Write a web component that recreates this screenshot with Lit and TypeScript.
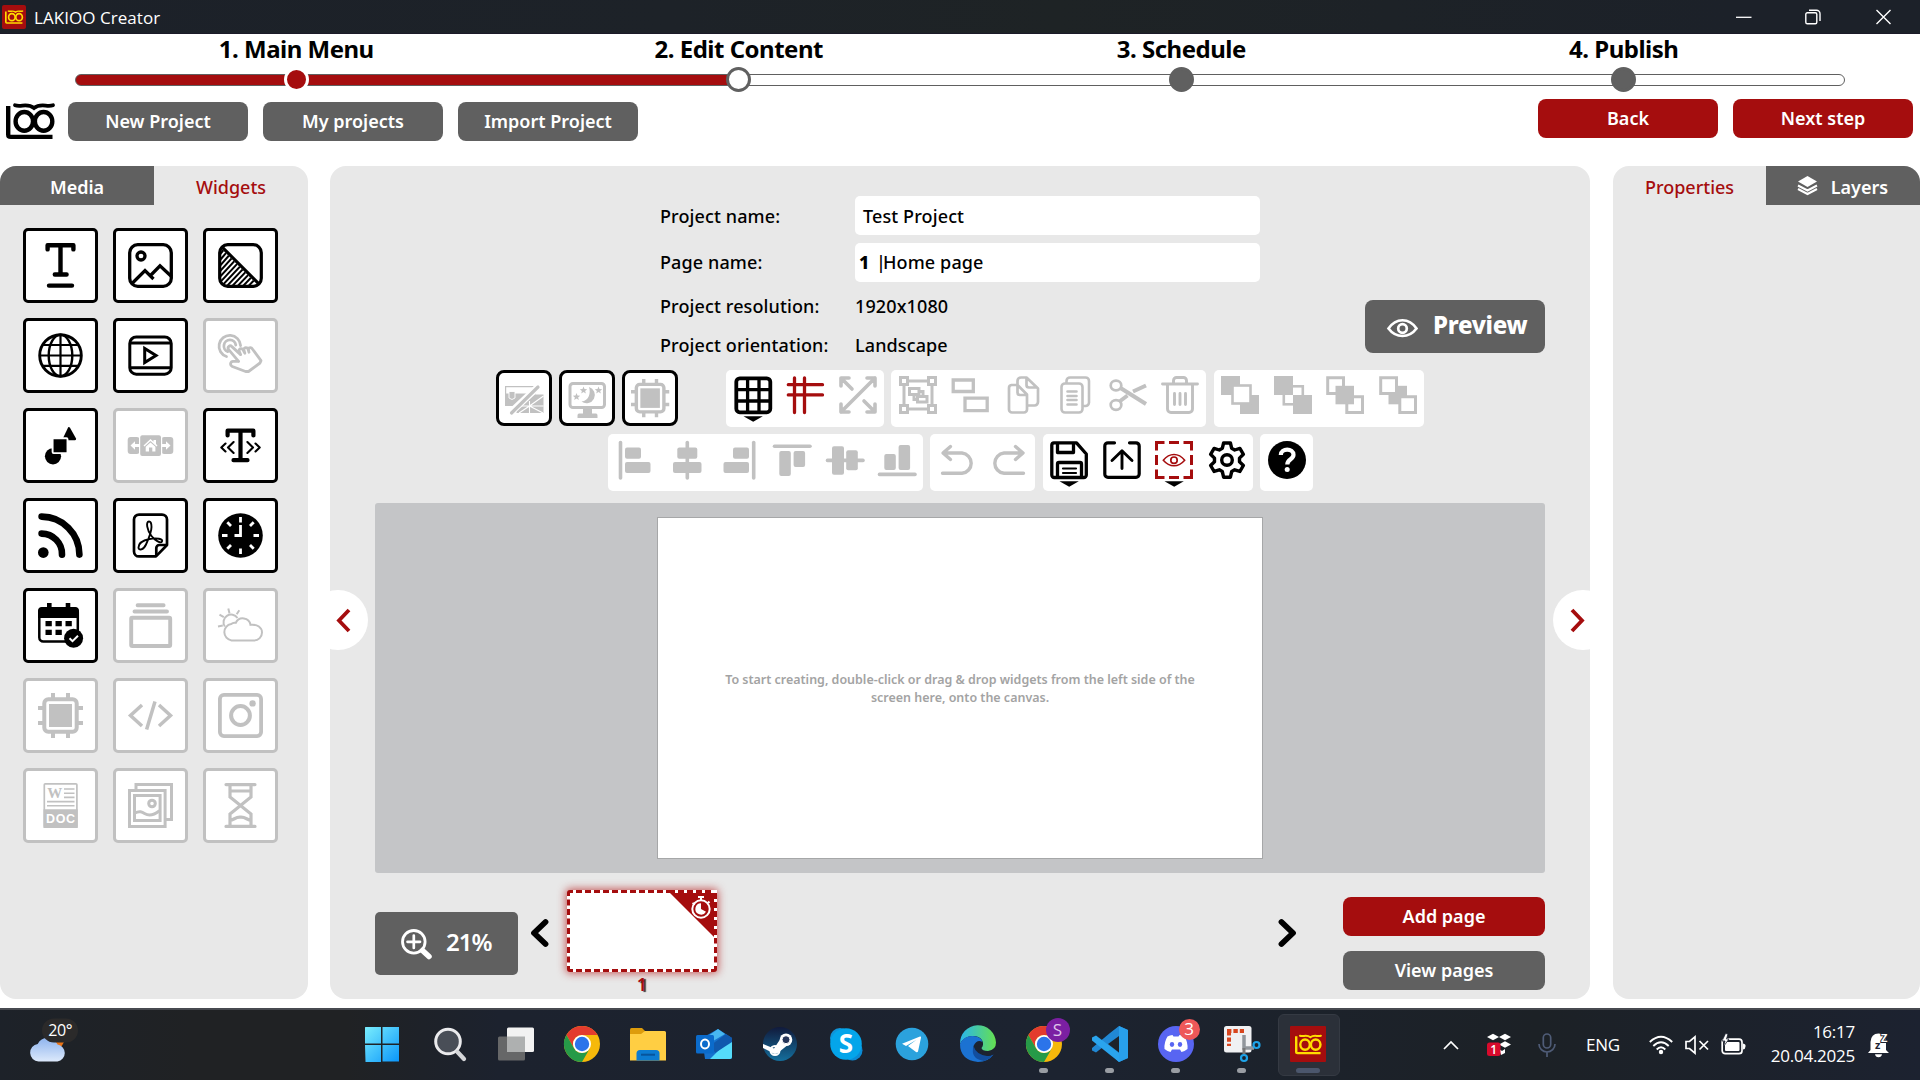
import { LitElement, html, css, svg, SVGTemplateResult } from "lit";
import { customElement } from "lit/decorators.js";
import { classMap } from "lit/directives/class-map.js";

type Art = SVGTemplateResult;

/* ---------- brand ---------- */
const logo = svg`
  <g fill="none" stroke="currentColor" stroke-linecap="round">
    <path d="M2.2 3V31.5q0 2.4 2.6 2.4H46.5" stroke-width="4.4" stroke-linecap="butt"/>
    <ellipse cx="18.3" cy="18.4" rx="8.7" ry="9.4" stroke-width="4.4"/>
    <ellipse cx="37.6" cy="18.4" rx="8.7" ry="9.4" stroke-width="4.4"/>
    <path d="M9 2.2C15 4.5 21 -.5 28 5 C35 -.5 41 4.5 47 2.2" stroke-width="3.8"/>
  </g>`;

/* ---------- widget palette, 45 x 45 ---------- */
const chip = svg`
  <g fill="none" stroke="currentColor" stroke-width="4">
    <rect x="6.3" y="6.3" width="32.4" height="32.4" rx="4"/>
    <path d="M15 0V6M30 0V6M15 39V45M30 39V45M0 15H6M0 30H6M39 15H45M39 30H45"/>
  </g><rect x="11" y="11" width="23" height="23" fill="currentColor"/>`;

const hatch = [14, 19.5, 25, 30.5, 36, 41.5, 47, 52.5, 58, 63.5, 69, 74.5];

const widgets: { off?: boolean; art: Art }[] = [
  { art: svg`<path d="M9.6 6.4V2.3H35.4V6.4M22.5 2.3V31.5M16.8 31.5H28.6M11 42.6H34" fill="none" stroke="currentColor" stroke-width="4.4" stroke-linecap="round" stroke-linejoin="round"/>` },
  { art: svg`<g fill="none" stroke="currentColor" stroke-width="3.3"><rect x="1.7" y="1.7" width="41.6" height="41.6" rx="8"/><circle cx="13" cy="13" r="4"/><path d="M3.5 41 17 27.6 25.5 36M22.5 32.5 32 22.8 43.5 33.5"/></g>` },
  { art: svg`<g fill="none" stroke="currentColor" stroke-width="3.2"><rect x="1.7" y="1.7" width="41.6" height="41.6" rx="8"/><path d="M3.6 3.6 41.6 41.6"/></g><clipPath id="tri"><path d="M2 4 41 43H9a7 7 0 0 1-7-7Z"/></clipPath><g clip-path="url(#tri)" stroke="currentColor" stroke-width="2">${hatch.map((c) => svg`<path d=${`M0 ${c}L${c} ${c * 0.02 - 4}`}/>`)}</g>` },
  { art: svg`<g fill="none" stroke="currentColor" stroke-width="2.9"><circle cx="22.5" cy="22.5" r="20.8"/><ellipse cx="22.5" cy="22.5" rx="11.8" ry="20.8" stroke-width="2.4"/><path d="M22.5 2V43M4.5 12H40.5M2 22.5H43M4.5 32.8H40.5" stroke-width="2.2"/></g>` },
  { art: svg`<g fill="none" stroke="currentColor" stroke-width="3"><rect x="1.8" y="4" width="41.4" height="37.2" rx="6.5"/><path d="M2 10H43M2 34.7H43"/><path d="M16.7 15.5V29.5L28 22.5Z"/></g>` },
  { off: true, art: svg`<g fill="none" stroke="currentColor" stroke-width="2.8" stroke-linejoin="round" stroke-linecap="round"><path d="M8.5 23.5A10.8 10.8 0 1 1 22.6 12.6M9.8 18.6A6 6 0 1 1 17.8 12"/><path d="M20.6 28.4 10.5 16.4c-1.5-2.4 1.5-4.8 3.4-2.8L22.6 21.6M22.6 21.6l-1.6-3.8c.3-2.8 3.4-2.6 4.2-.6l1.6 3-1-3.6c.6-2.6 3.6-2.3 4.2-.4l1 3-.6-3.2c.7-2 3-1.8 4 0L43 27.6 42 30 30.5 38.5H27.6L14.3 33.5c-3-1.6-1.6-5.4 1-5.2l5.3.1"/></g>` },
  { art: svg`<g fill="currentColor"><path d="M30.2 4.3q1-.6 1.8.5L38 15.6q.4 1.5-1 1.7H24Z"/><circle cx="15" cy="33.3" r="8.1"/><rect x="14.6" y="15.2" width="14.9" height="14.9" rx="1" stroke="#fff" stroke-width="1.9"/></g>` },
  { off: true, art: svg`<g fill="currentColor"><rect x="-.3" y="14" width="12" height="17" rx="3"/><rect x="33.3" y="14" width="12" height="17" rx="3"/><rect x="11.6" y="11.7" width="22" height="22" rx="2.6" stroke="#fff" stroke-width="1.2"/></g><g fill="#fff"><path d="M2.5 22.5 7 18.3V21h4v3H7v2.7ZM42.5 22.5 38 18.3V21h-4v3h4v2.7ZM15.500 22.500l7-6.500 3 2.800V17H28v4l1.500 1.500-1 1-6-5.400-6 5.400Z"/><path d="M17.700 23.800l4.800-4.300 4.900 4.300V28.500H24.300V24.500H21V28.500H17.700Z"/></g>` },
  { art: svg`<g fill="none" stroke="currentColor" stroke-linejoin="round" stroke-linecap="round"><path d="M9.6 12.5V7.7H35.4V12.5M22.5 7.7V37.2M15.5 37.2H29.5" stroke-width="4.2"/><path d="M7.5 20.5 3.3 24.5 7.5 28.5M15.6 19 10 24.5 15.6 30M37.5 20.5 41.7 24.5 37.5 28.5M29.4 19 35 24.5 29.4 30" stroke-width="2.1"/></g>` },
  { art: svg`<circle cx="5.3" cy="39.6" r="5.3" fill="currentColor"/><path d="M3.6 20.6A20.4 20.4 0 0 1 24 41.6M3.6 3.6A38 38 0 0 1 41.4 41.6" fill="none" stroke="currentColor" stroke-width="6.6" stroke-linecap="round"/>` },
  { art: svg`<g fill="none" stroke="currentColor" stroke-width="2.7" stroke-linejoin="round"><path d="M28 43.4H11a5 5 0 0 1-5-5V6.6a5 5 0 0 1 5-5H34a5 5 0 0 1 5 5V32Z"/><path d="M28.3 43V35a3 3 0 0 1 3-3H39"/><path stroke-width="1.9" d="M21 8.5c-3.5 0-2 9 2.5 14.500 3 4 9 8 10.500 5.500s-5.500-4-12.500-2.500S10.500 31 10.500 34.500s5 2.500 7.500-3S23.500 18 23.500 14 23 8.500 21 8.500Z"/></g>` },
  { art: svg`<circle cx="22.5" cy="22.5" r="22.3" fill="currentColor"/><g stroke="#fff" stroke-width="2.8" fill="none"><path d="M22.500 4V9.500M22.500 35.500V41M4 22.500H9.500M35.500 22.500H41M9.300 9.300 13 13M35.700 9.300 32 13M9.300 35.700 13 32M35.700 35.700 32 32M22.500 12V22.500H16.500" /></g>` },
  { art: svg`<rect x="1.300" y="5.200" width="38.500" height="33.300" rx="4" fill="none" stroke="currentColor" stroke-width="2.500"/><path d="M0 15V8q0-4 4-4H37q4 0 4 4V15ZM9 0h4.600V6H9ZM27.700 0h4.600V6h-4.600ZM7.500 18h6.300v5.300H7.500ZM17.500 18h6.300v5.300H17.500ZM27.500 18h6.300v5.300H27.500ZM7.500 26.700h6.300V32H7.500ZM17.500 26.700h6.300V32H17.500Z" fill="currentColor"/><circle cx="35.600" cy="35.300" r="9.500" fill="currentColor"/><path d="M31.500 35.300 34.500 38.200 40 32.800" stroke="#fff" stroke-width="2" fill="none"/>` },
  { off: true, art: svg`<g fill="none" stroke="currentColor" stroke-width="3.900"><path d="M9.600 2.300H35.600M6.500 8.500H39" stroke-linecap="round"/><rect x="3.200" y="14.800" width="39" height="28.200" rx="1"/></g>` },
  { off: true, art: svg`<g fill="none" stroke="currentColor" stroke-width="2"><path d="M13.500 37.400a8.300 8.300 0 0 1-.3-16.400c1.300-1.200 3-1.600 4.600-1.200a7.800 7.800 0 0 1 14.700 2c7-.8 11.500 2.800 11.500 7.800a7.800 7.800 0 0 1-7.800 7.800Z"/><path d="M6.800 23.500A7.200 7.200 0 1 1 19.500 15M0 23.400l4.800-.8M1.500 11.600l4.300 2.500M10.300 5.500l1.200 4.800M21.300 7.300l-2.600 4"/></g>` },
  { off: true, art: chip },
  { off: true, art: svg`<path d="M14 12 2.500 22.500 14 33M27 8.500 18.600 36.500M31 12 42.500 22.500 31 33" fill="none" stroke="currentColor" stroke-width="3.500"/>` },
  { off: true, art: svg`<rect x="1.900" y="1.900" width="41.200" height="41.200" rx="4" fill="none" stroke="currentColor" stroke-width="3.800"/><circle cx="22.500" cy="22.500" r="9.400" fill="none" stroke="currentColor" stroke-width="4"/><circle cx="34.600" cy="10.400" r="3.200" fill="currentColor"/>` },
  { off: true, art: svg`<rect x="6.300" y=".8" width="32.600" height="43.400" rx="1" fill="none" stroke="currentColor" stroke-width="1.700"/><path d="M5.500 26.300H39.700V45H5.500Z" fill="currentColor"/><path d="M26 6H36.500M26 10.200H36.500M26 14.400H36.500M9 18.600H36.500M9 22.700H36.500" stroke="currentColor" stroke-width="1.600"/><text class="w-letter" x="16.700" y="15.200">W</text><text class="doc-letters" x="22.900" y="39.500">DOC</text>` },
  { off: true, art: svg`<g fill="none" stroke="currentColor" stroke-width="3"><path d="M8 6V1.600H43.500V36.500H38"/><rect x="1.500" y="7.500" width="35.600" height="36"/><rect x="6.500" y="12.500" width="25.600" height="25"/><circle cx="24" cy="20.500" r="3.300"/><path d="M7 30c4.500-2.500 7-1 10 .8s8 2 14.500-3"/></g>` },
  { off: true, art: svg`<g fill="none" stroke="currentColor" stroke-width="3.200"><path d="M8 1.600H37M8 43.400H37" stroke-linecap="round"/><path d="M12 2V14L22.500 22.500 33 14V2M12 43V31L22.500 22.500 33 31V43M12 8H33M12.500 37.500C17 36 18 33.800 22.500 34.200 27 33.800 28 36 32.500 37.500"/></g>` },
];

/* ---------- toolbar, 38 x 38 ---------- */
const line = (d: string, w = 3.3) =>
  svg`<path d=${d} fill="none" stroke="currentColor" stroke-width=${w} stroke-linecap="round" stroke-linejoin="round"/>`;
const caret = svg`<path d="M9.500 40.300H28.800L19.200 45.800Z" fill="#000"/>`;

interface Tool { art: Art; tone?: "ink" | "red" }

const viewTools: Tool[] = [
  { tone: "ink", art: svg`<rect x="2.300" y="2.300" width="34" height="34" rx="3.500" fill="none" stroke="currentColor" stroke-width="3.800"/><path d="M13.600 2V36M25 2V36M2 13.600H36M2 25H36" stroke="currentColor" stroke-width="3.300"/>${caret}` },
  { tone: "red", art: line("M8.500 2V36.500M18.500 2V36.500M2.300 8.700H36.500M2.300 18.900H36.500", 3.300) },
  { art: line("M2 36 36 2M2 10V2H10M2.500 2.500 13 13M28 2H36V10M2 28V36H10M36 28V36H28M35.500 35.500 25 25", 3.600) },
];

const editTools: Tool[] = [
  { art: svg`<g fill="none" stroke="currentColor" stroke-width="3"><path d="M1.500 1.500H8.500V8.500H1.500ZM29.500 1.500H36.500V8.500H29.500ZM1.500 29.500H8.500V36.500H1.500ZM29.500 29.500H36.500V36.500H29.500ZM10 5H28M10 33H28M5 10V28M33 10V28"/><path d="M10.500 12.500H20V18.500H10.500ZM18.500 20.500H28V26H18.500ZM15 18V23.500H19M20 15.500H24V20"/></g>` },
  { art: svg`<path d="M2.200 4H22.300V15.500H2.200ZM14 22.200H36.200V34.700H14Z" fill="none" stroke="currentColor" stroke-width="3.300"/>` },
  { art: line("M7.500 9H13.500L23 18.500V33.500a3 3 0 0 1-3 3H8a3 3 0 0 1-3-3V12a3 3 0 0 1 2.500-3ZM13.500 9V16.500a2.500 2.500 0 0 0 2.500 2.500H22.500M13.500 8.500V5a3.500 3.500 0 0 1 3.500-3.500H22.500L34 12.500V26a3.500 3.500 0 0 1-3.500 3.500H24M22.500 2V9a2.500 2.500 0 0 0 2.500 2.500H33", 2.700) },
  { art: line("M10.500 7.500H23a3.500 3.500 0 0 1 3.500 3.500V33a3.500 3.500 0 0 1-3.500 3.500H9A3.500 3.500 0 0 1 5.500 33V11A3.500 3.500 0 0 1 9 7.500ZM10.500 7V5A3.500 3.500 0 0 1 14 1.500H29.500A3.500 3.500 0 0 1 33 5V26.500a3.500 3.500 0 0 1-3.500 3.500H27M11.500 15.500H20.500M11.500 20H20.500M11.500 24H20.500M11.500 28.500H20.500", 2.600) },
  { art: svg`<g fill="none" stroke="currentColor"><ellipse cx="7" cy="9.500" rx="5.300" ry="4.800" stroke-width="2.700"/><ellipse cx="7" cy="29" rx="5.300" ry="4.800" stroke-width="2.700"/><path d="M11.500 12 37 28M10.500 25.500 18.500 19.500M24 15.500 37 9.500" stroke-width="4"/></g>` },
  { art: line("M1.500 8H36.500M12.500 7.500V4.500a3 3 0 0 1 3-3H22.500a3 3 0 0 1 3 3V7.500M6.500 9.500V33a3.500 3.500 0 0 0 3.500 3.500H28a3.500 3.500 0 0 0 3.500-3.500V9.500M13.500 17.500V28.500M19 17.500V28.500M24.500 17.500V28.500", 2.900) },
];

const orderTools: Tool[] = [
  { art: svg`<path d="M0 0H19V19H0ZM19 19H38V38H19Z" fill="currentColor"/><rect x="11.500" y="9.500" width="18" height="18" fill="#fff" stroke="currentColor" stroke-width="2.600"/>` },
  { art: svg`<rect x="9.800" y="10.300" width="19" height="18" fill="#fff" stroke="currentColor" stroke-width="2.600"/><path d="M0 0H19V19H0ZM19 19H38V38H19Z" fill="currentColor"/>` },
  { art: svg`<path d="M1.700 1.700H17.500V17.500H1.700ZM20.800 20.800H36.500V36.500H20.800Z" fill="none" stroke="currentColor" stroke-width="3"/><rect x="9.500" y="9.800" width="18.500" height="18.500" fill="currentColor"/>` },
  { art: svg`<rect x="9.500" y="9.800" width="18.500" height="18.500" fill="currentColor"/><path d="M1.700 1.700H17.500V17.500H1.700ZM20.800 20.800H36.500V36.500H20.800Z" fill="#fff" stroke="currentColor" stroke-width="3"/>` },
];

const bars = (...b: number[][]) => b.map(([x, y, w, h]) => svg`<rect x=${x} y=${y} width=${w} height=${h} rx="2" fill="currentColor"/>`);
const alignTools: Tool[] = [
  { art: svg`${line("M4.500 1.500V37", 3.600)}${bars([9, 6.500, 16, 11.200], [9, 21, 25.500, 11])}` },
  { art: svg`${line("M19.300 1.500V37", 3.600)}${bars([9.300, 6.500, 20, 11.200], [5, 21, 28.500, 11])}` },
  { art: svg`${line("M32.700 1.500V37", 3.600)}${bars([12, 6.500, 16, 11.200], [2.500, 21, 25.500, 11])}` },
  { art: svg`${line("M1.500 5.300H37", 3.600)}${bars([6.300, 10, 11.500, 25], [20.600, 10, 11.500, 16])}` },
  { art: svg`${line("M1.500 19.400H37", 3.600)}${bars([6, 5.300, 12, 28.500], [20.200, 9.300, 11.600, 20])}` },
  { art: svg`${line("M1.500 33.400H37", 3.600)}${bars([6.300, 13, 11.500, 16], [20.600, 4, 11.500, 25])}` },
];
const historyTools: Tool[] = [
  { art: line("M12.500 5.500 5 12 12.500 18.500M5.500 12H24a10.200 10.200 0 0 1 0 20.300H4.500", 3.400) },
  { art: line("M25.500 5.500 33 12 25.500 18.500M32.500 12H14a10.200 10.200 0 0 0 0 20.300H33.500", 3.400) },
];
const fileTools: Tool[] = [
  { tone: "ink", art: svg`${line("M4 1.800H26.500L36.300 13V34a2.500 2.500 0 0 1-2.500 2.500H4.300A2.500 2.500 0 0 1 1.800 34V4A2.300 2.300 0 0 1 4 1.800ZM7.500 2V11.500H23.500V2M7.500 36V23a1.500 1.500 0 0 1 1.500-1.500H30a1.500 1.500 0 0 1 1.500 1.500V36", 3.300)}${line("M13 27.500H26M13 32H26", 2.200)}${caret}` },
  { tone: "ink", art: svg`${line("M11.500 1.800H5A3.200 3.200 0 0 0 1.800 5V33A3.200 3.200 0 0 0 5 36.300H33a3.200 3.200 0 0 0 3.200-3.200V5A3.200 3.200 0 0 0 33 1.800H26.500", 3.200)}${line("M19 27.500V10.500M9 19.500 19 9.800 29 19.500", 2.900)}` },
  { tone: "red", art: svg`<path d="M1.500 9.500V1.500H9.500M14 1.500H24M28.500 1.500H36.500V9.500M36.500 14V24M36.500 28.500V36.500H28.500M24 36.500H14M9.500 36.500H1.500V28.500M1.500 24V14" fill="none" stroke="currentColor" stroke-width="3"/><path d="M8.300 19.200C14.500 11.500 23.500 11.500 29.700 19.200 23.500 26.500 14.500 26.500 8.300 19.200Z" fill="none" stroke="currentColor" stroke-width="1.500"/><circle cx="19" cy="19.200" r="3.200" fill="none" stroke="currentColor" stroke-width="1.700"/>${caret}` },
  { tone: "ink", art: svg`<path d="M15.600 2h6.800l1.300 5.300 3 1.700 5.200-1.600 3.500 5.900-3.900 3.800v3.600l3.900 3.800-3.500 5.900-5.200-1.600-3 1.700L22.400 36.200H15.600L14.300 30.500l-3-1.700L6.100 30.400 2.600 24.500l3.900-3.800V17.100L2.600 13.300 6.100 7.400 11.300 9l3-1.700Z" fill="none" stroke="currentColor" stroke-width="3.400" stroke-linejoin="round"/><circle cx="19" cy="19" r="5.300" fill="none" stroke="currentColor" stroke-width="3.400"/>` },
];
const helpTools: Tool[] = [
  { tone: "ink", art: svg`<circle cx="19" cy="19" r="19" fill="currentColor"/><path d="M12.800 14C13 6.800 25.500 7 25.500 13.800 25.500 18.500 19.300 18 19.300 23.500" fill="none" stroke="#fff" stroke-width="4.200"/><circle cx="19.200" cy="28.600" r="2.500" fill="#fff"/>` },
];

const modeTools: Art[] = [
  svg`<path d="M.6 7.600H30V15H.6Z" fill="#fff" stroke="currentColor" stroke-width="1.200"/><path d="M0 15H22L9 27H0ZM21 18 24 15.500H38.500V34H11.500V27Z" fill="currentColor"/><path d="M4 12.500h6v6.500q-3 3-6 0Z" fill="currentColor" stroke="#fff" stroke-width=".9"/><path d="M24.500 22V34M13 27H38.500M24.500 27 38.500 17M24.500 27 38 34M24.500 27 14 34" stroke="#fff" stroke-width="1.100"/><path d="M36 5 3 36" stroke="#fff" stroke-width="7"/><path d="M33 8 6.500 34" stroke="currentColor" stroke-width="3.200" stroke-linecap="round"/>`,
  svg`<rect x="2" y="4.500" width="34.500" height="24" rx="3" fill="none" stroke="currentColor" stroke-width="3"/><path d="M15 29H24V34.500H28q1.500 0 1.500 2V39H9.500V36.500q0-2 1.500-2H15Z" fill="currentColor"/><path d="M21 8a8.300 8.300 0 1 1-7.500 14.500C21 22 23 14 21 8Z" fill="currentColor"/><path d="M15.500 7.500l1 2.600 2.700.1-2.100 1.800.8 2.600-2.400-1.500-2.300 1.500.7-2.600-2.100-1.800 2.700-.1ZM8.500 14l1 2.600 2.700.1-2.100 1.800.8 2.600-2.400-1.500-2.300 1.500.7-2.600-2.100-1.800 2.700-.1ZM30.500 7.500l1 2.600 2.700.1-2.100 1.800.8 2.600-2.400-1.500-2.300 1.500.7-2.600-2.100-1.800 2.700-.1Z" fill="currentColor"/>`,
  svg`<g transform="scale(.85)">${chip}</g>`,
];

/* ---------- taskbar, 36 x 36 ---------- */
const chrome = svg`
  <circle cx="18" cy="18" r="18" fill="#f6b90b"/>
  <path d="M2.400 9A18 18 0 0 1 33.600 9H18A9 9 0 0 0 10.200 22.500Z" fill="#e33b2e"/>
  <path d="M2.400 9A18 18 0 0 0 18 36L25.800 22.500A9 9 0 0 1 10.200 22.500Z" fill="#269a48"/>
  <circle cx="18" cy="18" r="9" fill="#fff"/><circle cx="18" cy="18" r="7.200" fill="#2b74ea"/>`;

interface Launcher { art: Art; running?: boolean; active?: boolean; badge?: string; badgeTone?: string }
const launchers: Launcher[] = [
  { art: svg`<linearGradient id="win" x2="1" y2="1" gradientUnits="userSpaceOnUse" gradientTransform="scale(36)"><stop stop-color="#7df0fd"/><stop offset="1" stop-color="#0894fb"/></linearGradient><path d="M1.500 1H17V17.500H1V2Q1 1 1.500 1ZM18.500 1H35V17.500H18.500ZM1 19H17V36H1.500ZM18.500 19H35V35.500H18.500Z" fill="url(#win)"/>` },
  { art: svg`<circle cx="16" cy="15.500" r="12.300" fill="#494e57" stroke="#ebebed" stroke-width="3"/><path d="M25.500 26 32 33" stroke="#d5d6d9" stroke-width="4.300" stroke-linecap="round"/>` },
  { art: svg`<rect x="0" y="10.500" width="27" height="24" rx="1.500" fill="#666768"/><rect x="9" y="1.500" width="27" height="24.500" rx="1.500" fill="#f2f2f2"/><path d="M9 10.500H27V26H9Z" fill="#aeb0b0"/>` },
  { art: chrome },
  { art: svg`<path d="M0 3.500Q0 2 1.500 2H12L15 5V10H0Z" fill="#dd9c0c"/><path d="M0 8H11L15 5H34.500Q36 5 36 6.500V34.500H0Z" fill="#ffce43"/><path d="M6.500 34.500V27.500q0-3.500 3.500-3.500H26q3.500 0 3.500 3.500V34.500Z" fill="#0c7bd1"/><path d="M11 28.700H25" stroke="#07549c" stroke-width="2"/>` },
  { art: svg`<path d="M6 12 22 3 36 12V31q0 2-2 2H9Z" fill="#1672ce"/><path d="M12 10 22 3 29 8 12 18Z" fill="#48b8f0"/><path d="M22 25 36 14V31q0 2-2 2H14Z" fill="#55dcfa"/><path d="M15 19 30 8 36 12V16L19 27Z" fill="#1059ad"/><rect x="0" y="9" width="18" height="18.500" rx="1.500" fill="#0b6bcb"/><ellipse cx="9" cy="18" rx="4" ry="4.500" fill="none" stroke="#fff" stroke-width="2"/>` },
  { art: svg`<linearGradient id="stm" x2="0" y2="1"><stop stop-color="#111a3b"/><stop offset="1" stop-color="#146f9d"/></linearGradient><circle cx="18" cy="18" r="17" fill="url(#stm)"/><path d="M1 18 12 22.500 19 12 27 18 17 26Q13 30 9 26L1 22Z" fill="#fff"/><circle cx="24" cy="13.700" r="6.300" fill="#fff"/><circle cx="24" cy="13.700" r="4" fill="#26365a" stroke="#fff" stroke-width="1"/><circle cx="13" cy="24.500" r="4.500" fill="none" stroke="#fff" stroke-width="2"/>` },
  { art: svg`<circle cx="12" cy="12" r="10" fill="#1094d8"/><circle cx="24.500" cy="24.500" r="10" fill="#0b8bd5"/><circle cx="18" cy="18" r="15.800" fill="#04a5ea"/><text class="skype-letter" x="18" y="27.300">S</text>` },
  { art: svg`<circle cx="18" cy="18" r="16.300" fill="#2ba2dd"/><path d="M8 17.700 26 10.500Q27.300 10.200 27 11.700L24 25.500Q23.500 26.800 22 26L14 20 22.500 13.700 12 20Z" fill="#fff"/>` },
  { art: svg`<linearGradient id="edg" x2="1"><stop stop-color="#2ab5ed"/><stop offset="1" stop-color="#65e050"/></linearGradient><path d="M0 18A18 18 0 0 1 36 16.500Q36 24 28 25Q22 25 21.500 22Q24 19 22.500 15Q20 10 13 10Q4 10 0 18Z" fill="url(#edg)"/><path d="M0 18Q4 9.500 13 10Q21 10.500 22.500 16Q17 13 13.500 20Q12 31 26 31.500Q30 31 33.500 28.500Q28 36 18 36Q0 34 0 18Z" fill="#1b72d2"/><path d="M13.500 20Q10 33 24 35Q30 33 33.500 28.500Q31 30.500 27 30Q16 28.500 13.500 20Z" fill="#124e9e"/>` },
  { art: chrome, running: true, badge: "S", badgeTone: "plum" },
  { art: svg`<path d="M27 0 36 4V32L27 36 11 21 4 26.500 0 24.500V22L18 7Z" fill="#2188d4"/><path d="M0 11.500 4 9.500 27 27V36L0 14.500Z" fill="#2aa4ed"/><path d="M27 10 16 18 27 26.500Z" fill="#1d232b"/><path d="M27 0 36 4V32L27 36Z" fill="#28a0ec"/>`, running: true },
  { art: svg`<circle cx="18" cy="18" r="18" fill="#5865f2"/><path d="M9.500 10.500Q12 9.300 14.500 9L15.500 10.500H20.500L21.500 9Q24 9.300 26.500 10.500 30 16 29.500 23 26.500 25.500 23.500 26L22 23.500H14L12.500 26Q9.500 25.500 6.500 23 6 16 9.500 10.500Z" fill="#fff"/><ellipse cx="14" cy="18.500" rx="2.200" ry="2.400" fill="#5865f2"/><ellipse cx="22" cy="18.500" rx="2.200" ry="2.400" fill="#5865f2"/>`, running: true, badge: "3", badgeTone: "coral" },
  { art: svg`<rect x="0" y="0" width="27.500" height="26.500" rx="2.500" fill="#f0f1f3"/><path d="M3 5H20M5 5V20" stroke="#d8461f" stroke-width="4" stroke-dasharray="4.400 2"/><path d="M20 9V22H30" fill="none" stroke="#91969c" stroke-width="3.500"/><path d="M20 22V28" stroke="#777" stroke-width="3"/><circle cx="32.500" cy="19" r="3" fill="none" stroke="#1ea3e8" stroke-width="2.200"/><circle cx="20" cy="32" r="3" fill="none" stroke="#1ea3e8" stroke-width="2.200"/>`, running: true },
  { art: svg`<rect width="36" height="36" rx="1" fill="#a50d0e"/><g transform="translate(5 8.500) scale(.55)" color="#ffdd00">${logo}</g>`, running: true, active: true },
];

@customElement("app-root")
export class AppRoot extends LitElement {
  static styles = css`
    :host {
      display: grid;
      grid-template-rows: 34px 132px 833px 9px 72px;
      width: 1920px;
      height: 1080px;
      overflow: hidden;
      background: #fff;
      color: #000;
      font: 500 18px/24px "Noto Sans", "Open Sans", sans-serif;
      --red: #a50d0e;
      --gray: #606060;
      --panel: #e8e8e8;
    }
    * { box-sizing: border-box; }
    svg { display: block; overflow: visible; flex: none; }
    button { font: inherit; border: 0; padding: 0; margin: 0; background: none; color: inherit; }

    .titlebar {
      display: flex; align-items: center; padding-left: 2px;
      background: linear-gradient(90deg, #1c2129, #1d2228 35%, #1e2325 55%, #1c2129 90%);
      border-bottom: 1px solid #1b1a28;
      color: #fff; font: 400 17px/20px "Open Sans", "Noto Sans", sans-serif;
    }
    .app-icon { width: 24px; height: 24px; background: var(--red); border-radius: 2px; display: grid; place-items: center; color: #ffdd00; margin-right: 8px; }
    .app-name { letter-spacing: 0.05px; margin-top: 2px; }
    .window-controls { margin-left: auto; display: flex; margin-right: 28px; gap: 54px; }

    .header { display: grid; grid-template-rows: 33px 25px 7px 1fr; }
    .step-names { display: grid; grid-template-columns: repeat(4, 442.5px); margin-left: 75px; text-align: center; font-weight: 700; font-size: 24px; line-height: 29px; letter-spacing: -.5px; }
    .track { display: grid; align-items: center; width: 1770px; margin-left: 75px; }
    .rail, .dots { grid-area: 1 / 1; }
    .rail { height: 12px; border: 1px solid var(--gray); border-radius: 6px; background: linear-gradient(90deg, var(--red) 664px, #fff 664px); }
    .dots { display: grid; grid-template-columns: repeat(4, 1fr); justify-items: center; }
    .dot { width: 25px; height: 25px; border-radius: 50%; background: var(--gray); border: 3px solid var(--gray); }
    .dot.done { background: var(--red); border-color: #fff; }
    .dot.current { background: #fff; }
    .actions { display: flex; padding-left: 6px; gap: 15px; align-items: flex-start; }
    .brand { margin: 4px -1px 0 0; }
    .btn { height: 39px; width: 180px; border-radius: 8px; background: var(--gray); color: #fff; font-weight: 600; line-height: 36px; padding-bottom: 1px; text-align: center; }
    .btn.red { background: var(--red); }
    .left-btn { margin-top: 3px; }
    .spacer { flex: 1; }
    .actions .btn:last-child { margin-right: 7px; }

    .workspace { display: grid; grid-template-columns: 308px 22px 1260px 23px 307px; }
    .stage { grid-column: 3; }
    .panel.right { grid-column: 5; }
    .panel { background: var(--panel); border-radius: 16px; overflow: hidden; }
    .tabs { display: grid; grid-template-columns: 1fr 1fr; grid-template-rows: 39px; height: 39px; line-height: 24px; text-align: center; }
    .tab { display: flex; justify-content: center; align-items: center; gap: 14px; color: var(--red); padding-top: 2px; }
    .right .tabs { grid-template-columns: 153px 154px; }
    .tab.dark { background: var(--gray); color: #fff; font-weight: 600; }
    .widgets { display: grid; grid-template-columns: repeat(3, 75px); gap: 15px; padding: 23px; }
    .widget { height: 75px; border: 3px solid #000; border-radius: 5px; background: #fff; display: grid; place-items: center; }
    .widget.off { border-color: #c1c1c1; color: #c1c1c1; }
    .w-letter { font: 700 15px "Liberation Serif", serif; fill: currentColor; text-anchor: middle; }
    .doc-letters { font: 700 12.500px "Liberation Sans", sans-serif; fill: #fff; text-anchor: middle; letter-spacing: .6px; }

    .stage { background: var(--panel); border-radius: 16px; display: grid; grid-template-rows: 204px 57px 7px 57px 12px 370px 1fr; position: relative; }
    .meta { display: flex; justify-content: space-between; padding: 30px 45px 0 330px; }
    .fields { display: grid; grid-template-columns: 195px 405px; grid-template-rows: 39px 37px 36px 26px; row-gap: 8px; align-items: center; letter-spacing: .12px; }
    .field { height: 39px; border-radius: 5px; background: #fff; display: flex; align-items: center; padding-left: 8px; }
    .field.page { padding: 0 0 2px 4px; align-self: start; }
    .field.page b { font-weight: 800; width: 17px; }
    .field.page i { font-style: normal; width: 7px; }
    .preview { align-self: flex-start; margin-top: 104px; width: 180px; height: 53px; border-radius: 8px; background: var(--gray); color: #fff; display: flex; align-items: center; padding-left: 22px; gap: 15px; font-weight: 800; font-size: 24px; }
    .preview span { margin-top: -3px; letter-spacing: -.3px; }

    .toolbar { display: flex; gap: 7.500px; }
    .toolbar.first { padding-left: 166px; }
    .toolbar.second { padding-left: 278px; }
    .modes { display: flex; gap: 7px; margin-right: 40.500px; }
    .mode { width: 56px; height: 56px; border: 3px solid #000; border-radius: 8px; background: #fff; display: grid; place-items: center; color: #c1c1c1; }
    .group { display: flex; height: 57px; background: #fff; border-radius: 5px; }
    .tool { width: 52.500px; padding: 6px 0 0 7.600px; color: #c1c1c1; }
    .second .tool { padding-top: 7px; }
    .second .group { margin-left: -.1px; }
    .tool.ink { color: #000; }
    .tool.red { color: var(--red); }

    .viewport { grid-row: 6; margin: 0 45px; background: #c4c5c7; border-radius: 3px; display: grid; place-items: center; }
    .canvas { width: 606px; height: 342px; border: 1px solid #a6a7a8; background: #fff; display: grid; place-items: center; text-align: center; color: #a3a3a3; font-weight: 600; font-size: 12.480px; line-height: 18px; }
    .canvas p { margin: 0; padding-top: 2px; width: 500px; }

    .flap { position: absolute; top: 424px; width: 60px; height: 60px; border-radius: 50%; background: #fff; color: var(--red); display: grid; place-items: center; }
    .flap.l { left: -22px; padding-left: 10px; }
    .flap.r { right: -23px; padding-right: 11px; }

    .pages { grid-row: 7; display: flex; padding: 0 45px; }
    .zoom { width: 143px; height: 63px; margin-top: 39px; border-radius: 5px; background: var(--gray); color: #fff; font-weight: 600; font-size: 24px; display: flex; align-items: center; padding-left: 26px; gap: 14px; }
    .zoom span { margin-top: -3px; letter-spacing: -1px; }
    .prev { margin: 46px 0 0 12px; }
    .thumb-col { margin: 17px 0 0 18px; width: 150px; text-align: center; }
    .thumb { width: 150px; height: 82px; border: 3px dashed var(--red); border-radius: 3px; background: #fff; background-clip: border-box; box-shadow: 0 0 9px 1px #b71d1dbb; display: flex; justify-content: flex-end; }
    .thumb svg { margin: -3px; }
    .thumb-no { color: var(--red); font-weight: 600; line-height: 24px; text-shadow: 2px 1px 1px #333; }
    .next { margin: 46px 46px 0 auto; }
    .page-btns { display: grid; gap: 15px; align-content: start; margin-top: 24px; }
    .page-btns .btn { width: 202px; line-height: 39px; padding: 0; }

    .taskbar { grid-row: 5; display: flex; align-items: center; border-top: 2px solid #474a50; color: #fff; background: linear-gradient(90deg, #1d2229, #202224 10%, #202224 18%, #1c222e 26%, #1c2330 55%, #1c2126 80%, #1c2230); font: 400 17px/24px "Open Sans", "Noto Sans", sans-serif; }
    .weather { width: 349px; padding-left: 30px; height: 60px; }
    .temp { font-size: 16px; font-family: "Open Sans", sans-serif; fill: #fff; text-anchor: middle; letter-spacing: -.4px; }
    .apps { display: flex; }
    .launcher { width: 66px; height: 70px; padding: 16px 15px 0; position: relative; }
    .launcher:first-child { margin-right: 1.500px; }
    .launcher.active::before { content: ""; position: absolute; left: 3px; top: 4px; width: 60px; height: 60px; border-radius: 6px; background: #2b3039; border: 1px solid #353a43; }
    .launcher svg { position: relative; }
    .run { position: absolute; left: 28px; top: 58px; width: 9px; height: 5px; border-radius: 3px; background: #999da3; }
    .active .run { left: 21px; width: 24px; background: #4b566c; }
    .badge { position: absolute; right: 7px; top: 9px; width: 24px; height: 24px; border-radius: 50%; line-height: 23px; text-align: center; font-size: 17px; }
    .badge.plum { background: #7b1fa2; color: #dfc5e9; top: 8px; }
    .badge.coral { background: #ee5859; right: 9px; width: 21px; height: 21px; line-height: 20px; }
    .skype-letter { font: 700 26px "Open Sans", sans-serif; fill: #fff; text-anchor: middle; }
    .drop-no { font: 600 12px "Open Sans", sans-serif; fill: #fff; text-anchor: middle; }
    .tray { display: flex; align-items: center; margin-left: auto; padding-right: 30px; }
    .dropbox { margin-left: 28px; }
    .mic { margin-left: 27px; }
    .speaker, .battery { margin-left: 12px; }
    .lang { width: 36px; margin: 0 27px 0 30px; letter-spacing: -.2px; }
    .clock { width: 90px; text-align: right; margin: -2px 13px 0 19px; letter-spacing: -.25px; white-space: nowrap; }
    .zz { font: 700 11px "Open Sans", sans-serif; }
  `;

  private icon(art: Art, w: number, h = w) {
    return html`<svg width=${w} height=${h} viewBox="0 0 ${w} ${h}">${art}</svg>`;
  }

  private group(tools: Tool[]) {
    return html`<div class="group">${tools.map((t) => html`<div class="tool ${t.tone ?? ""}">${this.icon(t.art, 38)}</div>`)}</div>`;
  }

  private titlebar() {
    return html`<div class="titlebar">
      <div class="app-icon"><svg width="18" height="14" viewBox="0 0 48 36">${logo}</svg></div>
      <div class="app-name">LAKIOO Creator</div>
      <div class="window-controls">
        ${this.icon(svg`<path d="M0 8.300H15.500" stroke="#fff" stroke-width="1.300"/>`, 16)}
        ${this.icon(svg`<rect x="-.2" y="3.800" width="11" height="11" rx="1.500" fill="none" stroke="#fff" stroke-width="1.400"/><path d="M3 1.200H10.500a3.500 3.500 0 0 1 3.500 3.500V12" fill="none" stroke="#fff" stroke-width="1.400"/>`, 16)}
        ${this.icon(svg`<path d="M.5 1 14.500 15M14.500 1 .5 15" stroke="#fff" stroke-width="1.400"/>`, 16)}
      </div>
    </div>`;
  }

  private header() {
    return html`<div class="header">
      <div class="step-names"><span>1. Main Menu</span><span>2. Edit Content</span><span>3. Schedule</span><span>4. Publish</span></div>
      <div class="track">
        <div class="rail"></div>
        <div class="dots"><div class="dot done"></div><div class="dot current"></div><div class="dot"></div><div class="dot"></div></div>
      </div>
      <div></div>
      <div class="actions">
        <div class="brand">${this.icon(logo, 48, 36)}</div>
        <button class="btn left-btn">New Project</button>
        <button class="btn left-btn">My projects</button>
        <button class="btn left-btn">Import Project</button>
        <div class="spacer"></div>
        <button class="btn red">Back</button>
        <button class="btn red">Next step</button>
      </div>
    </div>`;
  }

  private stage() {
    return html`<div class="stage">
      <div class="meta">
        <div class="fields">
          <span>Project name:</span><div class="field">Test Project</div>
          <span>Page name:</span><div class="field page"><b>1</b><i>|</i>Home page</div>
          <span>Project resolution:</span><span>1920x1080</span>
          <span>Project orientation:</span><span>Landscape</span>
        </div>
        <button class="preview">
          ${this.icon(svg`<path d="M1.500 11.500C9 .5 22 .5 29.500 11.500 22 21.500 9 21.500 1.500 11.500Z" fill="none" stroke="#fff" stroke-width="2.700"/><circle cx="15.500" cy="11.500" r="4.300" fill="none" stroke="#fff" stroke-width="2.700"/>`, 31, 19)}
          <span>Preview</span>
        </button>
      </div>
      <div class="toolbar first">
        <div class="modes">${modeTools.map((m) => html`<div class="mode">${this.icon(m, 38)}</div>`)}</div>
        ${this.group(viewTools)}${this.group(editTools)}${this.group(orderTools)}
      </div>
      <div></div>
      <div class="toolbar second">
        ${this.group(alignTools)}${this.group(historyTools)}${this.group(fileTools)}${this.group(helpTools)}
      </div>
      <div class="viewport"><div class="canvas"><p>To start creating, double-click or drag &amp; drop widgets from the left side of the<br>screen here, onto the canvas.</p></div></div>
      <div class="pages">
        <button class="zoom">
          ${this.icon(svg`<circle cx="12.800" cy="12.800" r="11.300" fill="none" stroke="#fff" stroke-width="2.800"/><path d="M6.500 12.800H19M12.800 6.500V19" stroke="#fff" stroke-width="2.700" stroke-linecap="round"/><path d="M21.500 21.500 28 27.500" stroke="#fff" stroke-width="5.500" stroke-linecap="round"/>`, 31, 30)}
          <span>21%</span>
        </button>
        <div class="prev">${this.icon(svg`<path d="M15.500 3 4 14 15.500 25" fill="none" stroke="#000" stroke-width="5.800" stroke-linecap="round" stroke-linejoin="round"/>`, 19, 28)}</div>
        <div class="thumb-col">
          <div class="thumb">${this.icon(svg`<path d="M-3 0H47V50Z" fill="#a50d0e"/><path d="M5 1.500H47M45.500 0V48" stroke="#fff" stroke-width="3" stroke-dasharray="3 6"/><circle cx="31" cy="19" r="8.700" fill="none" stroke="#fff" stroke-width="2"/><path d="M31 19V13.300A5.700 5.700 0 1 0 36 21.800Z" fill="#fff"/><path d="M31 10V7M28 7H34M22.500 13 25 14.500M38 11.500 39.500 13" stroke="#fff" stroke-width="2"/>`, 47, 48)}</div>
          <div class="thumb-no">1</div>
        </div>
        <div class="next">${this.icon(svg`<path d="M3.500 3 15 14 3.500 25" fill="none" stroke="#000" stroke-width="5.800" stroke-linecap="round" stroke-linejoin="round"/>`, 19, 28)}</div>
        <div class="page-btns"><button class="btn red">Add page</button><button class="btn">View pages</button></div>
      </div>
      <div class="flap l">${this.icon(svg`<path d="M14 2 4 12.500 14 23" fill="none" stroke="currentColor" stroke-width="3.800"/>`, 16, 25)}</div>
      <div class="flap r">${this.icon(svg`<path d="M2 2 12 12.500 2 23" fill="none" stroke="currentColor" stroke-width="3.800"/>`, 16, 25)}</div>
    </div>`;
  }

  private taskbar() {
    return html`<div class="taskbar">
      <div class="weather">${this.icon(svg`
        <linearGradient id="cl" x2="0" y2="1"><stop stop-color="#8fb4ee"/><stop offset="1" stop-color="#dce9fb"/></linearGradient>
        <path d="M20 22Q30 18 34 27L30 34Z" fill="#ea7416"/>
        <path d="M8.500 46.500a8.800 8.800 0 0 1-.8-17.500A11 11 0 0 1 27.500 29.500a8.600 8.600 0 0 1 0 17Z" fill="url(#cl)"/>
        <rect x="12" y="3.500" width="36" height="24" rx="12" fill="#2b2a2a"/><text class="temp" x="30.200" y="21.200">20°</text>`, 60, 60)}</div>
      <div class="apps">${launchers.map((l) => html`
        <div class=${classMap({ launcher: true, active: !!l.active })}>
          ${this.icon(l.art, 36)}
          ${l.badge ? html`<div class="badge ${l.badgeTone ?? ""}">${l.badge}</div>` : ""}
          ${l.running ? html`<div class="run"></div>` : ""}
        </div>`)}</div>
      <div class="tray">
        ${this.icon(svg`<path d="M1 9 8 2 15 9" fill="none" stroke="#fff" stroke-width="1.700"/>`, 16, 11)}
        <svg class="dropbox" width="24" height="24" viewBox="0 0 24 24"><path d="M0 4 6 .8 12 4 6 7.200ZM12 4 18 .8 24 4 18 7.200ZM12 11.500 18 8.300 24 11.500 18 14.700ZM12 16 15 18 18 16V20L14 22Z" fill="#fff"/><rect x="0" y="9.500" width="13.500" height="13.500" rx="2.500" fill="#d80a2c"/><text class="drop-no" x="6.600" y="20.600">1</text></svg>
        <svg class="mic" width="18" height="24" viewBox="0 0 18 24"><g fill="none" stroke="#4f5c77" stroke-width="1.700"><rect x="5.300" y="1" width="7.400" height="14" rx="3.700"/><path d="M1 11a8 8 0 0 0 16 0M9 19V24"/></g></svg>
        <div class="lang">ENG</div>
        ${this.icon(svg`<g fill="none" stroke="#fff" stroke-width="1.900"><path d="M.8 7Q12-3.500 23.200 7M4.300 11Q12 3.500 19.700 11M7.700 14.500Q12 10 16.300 14.500"/></g><circle cx="12" cy="17" r="2.200" fill="#fff"/>`, 24, 20)}
        <svg class="speaker" width="24" height="20" viewBox="0 0 24 20"><path d="M1 6.500H4.500L10 1.800V18.200L4.500 13.500H1ZM14.500 6 23 14.500M23 6 14.500 14.500" fill="none" stroke="#fff" stroke-width="1.700"/></svg>
        <svg class="battery" width="25" height="22" viewBox="0 0 25 22"><rect x="1.200" y="5.200" width="19.800" height="14.500" rx="3" fill="none" stroke="#fff" stroke-width="1.700"/><rect x="4" y="8" width="14.500" height="9" rx="1" fill="#fff"/><path d="M22 9.500Q25 10 24.500 12.500 24.500 15 22 15.500Z" fill="#fff"/><path d="M4.500-.5 1 7H4L2.500 12.500 8 5H5.500L7 0Z" fill="#fff" stroke="#1c2230" stroke-width=".8"/></svg>
        <div class="clock">16:17<br>20.04.2025</div>
        <svg width="22" height="26" viewBox="0 0 22 26"><path d="M2.500 18V10Q3 1.500 10.500 1.500 18 1.500 18 10V18L21 21H0ZM7 22.300H14Q13.500 25.300 10.500 25.300 7.500 25.300 7 22.300Z" fill="#fff"/><text class="zz" x="7" y="17" fill="#1c2230">z</text><text class="zz" x="13" y="10" fill="#fff" stroke="#1c2230" stroke-width="2" paint-order="stroke">Z</text></svg>
      </div>
    </div>`;
  }

  render() {
    return html`
      ${this.titlebar()}
      ${this.header()}
      <div class="workspace">
        <div class="panel">
          <div class="tabs"><div class="tab dark">Media</div><div class="tab">Widgets</div></div>
          <div class="widgets">${widgets.map((w) => html`<div class=${classMap({ widget: true, off: !!w.off })}>${this.icon(w.art, 45)}</div>`)}</div>
        </div>
        ${this.stage()}
        <div class="panel right">
          <div class="tabs">
            <div class="tab">Properties</div>
            <div class="tab dark">${this.icon(svg`<path d="M9.500-1 19 4.500 9.500 10 0 4.500Z" fill="#fff"/><path d="M0 8.500 9.500 13.500 19 8.500M0 12 9.500 17 19 12" fill="none" stroke="#fff" stroke-width="2"/>`, 19, 19)}Layers</div>
          </div>
        </div>
      </div>
      ${this.taskbar()}
    `;
  }
}
